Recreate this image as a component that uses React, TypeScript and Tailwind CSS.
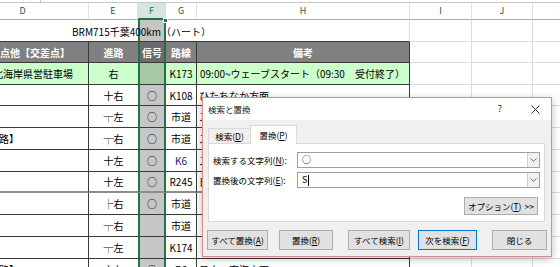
import React from 'react'

type Row = {
  h: string
  d?: string
  e: string
  f: string
  g: string
  note?: string
  gc?: string
  thick?: boolean
}

const GRID = 'grid grid-cols-[132px_49px_28px_31px_213px_62px_61px_60px] -ml-[43px]'
const DARK = 'border-[#3a3a3a]'
const LIGHT = 'border-[#dcdcdc]'

const rows: Row[] = [
  { h: 'h-[21px]', e: '十右', f: '○', g: 'K108', note: 'ひたちなか方面' },
  { h: 'h-[22px]', e: '┬左', f: '○', g: '市道', note: 'スポーツセンター方面' },
  { h: 'h-[22px]', d: '路】', e: '┬右', f: '○', g: '市道', note: 'ス停留所先' },
  { h: 'h-[22px]', e: '十左', f: '○', g: 'K6', note: 'ス方面', gc: 'text-[#23237a]' },
  { h: 'h-[21px]', e: '十左', f: '○', g: 'R245', note: '日立方面', thick: true },
  { h: 'h-[22px]', e: '├右', f: '○', g: '市道', note: '' },
  { h: 'h-[22px]', e: '┬右', f: '', g: '市道', note: '' },
  { h: 'h-[22px]', e: '┬左', f: '', g: 'K174', note: '' },
  { h: 'h-[22px]', d: '路】', e: '十左', f: '○', g: 'R6', note: '日立・東海方面' },
]

const U = ({ c }: { c: string }) => <span className="underline underline-offset-[1px]">{c}</span>

const Btn = ({ children, cls }: { children: React.ReactNode; cls: string }) => (
  <div
    className={`h-[20px] flex items-center justify-center bg-[#e1e1e1] border text-[8.5px] text-black ${cls}`}
  >
    {children}
  </div>
)

const Combo = ({ children }: { children: React.ReactNode }) => (
  <div className="w-[243px] h-[16px] flex border border-[#a0a0a0] bg-white">
    <div className="flex-1 flex items-center pl-[4px] text-[9px] text-black">{children}</div>
    <div className="w-[12px] flex items-center justify-center border-l border-[#d0d0d0] bg-[#f0f0f0]">
      <svg width="7" height="4" viewBox="0 0 7 4">
        <path d="M0.5 0.5 L3.5 3.3 L6.5 0.5" fill="none" stroke="#606060" strokeWidth="0.9" />
      </svg>
    </div>
  </div>
)

const Dialog = () => (
  <div className="absolute left-[202px] top-[97px] w-[350px] h-[160px] border border-[#d48c8c] bg-[#f0f0f0] shadow-[0_2px_8px_rgba(0,0,0,0.25)] flex flex-col">
    <div className="h-[22px] bg-white flex items-center pl-[5px] pr-[1px] text-[8.5px] text-[#222]">
      <span>検索と置換</span>
      <div className="ml-auto flex gap-[5px]">
        <div className="w-[30px] flex justify-center text-[9px]">?</div>
        <div className="w-[30px] flex justify-center items-center">
          <svg width="9" height="9" viewBox="0 0 9 9">
            <path d="M0.5 0.5 L8.5 8.5 M8.5 0.5 L0.5 8.5" stroke="#333" strokeWidth="1" />
          </svg>
        </div>
      </div>
    </div>
    <div className="h-[23px] flex items-end pl-[5px] text-[8.5px] text-black">
      <div className="w-[42px] h-[15px] flex items-center justify-center border border-b-0 border-r-0 border-[#d9d9d9] bg-[#f0f0f0]">
        検索(<U c="D" />)
      </div>
      <div className="relative z-10 -mb-px w-[47px] h-[19px] flex items-center justify-center border border-b-0 border-[#d9d9d9] bg-white">
        置換(<U c="P" />)
      </div>
    </div>
    <div className="ml-[5px] w-[337px] h-[79px] border border-[#d9d9d9] bg-white flex flex-col text-[8.5px] text-black">
      <div className="mt-[8px] flex items-center pl-[4px]">
        <div className="w-[84px]">
          検索する文字列(<U c="N" />):
        </div>
        <Combo>○</Combo>
      </div>
      <div className="mt-[4px] flex items-center pl-[4px]">
        <div className="w-[84px]">
          置換後の文字列(<U c="E" />):
        </div>
        <Combo>
          S<span className="inline-block w-px h-[11px] bg-black ml-px" />
        </Combo>
      </div>
      <div className="mt-[9px] flex justify-end pr-[6px]">
        <div className="w-[74px] h-[18px] flex items-center justify-center gap-[3px] bg-[#e1e1e1] border border-[#adadad]">
          <span>
            オプション(<U c="T" />)
          </span>
          <span>&gt;&gt;</span>
        </div>
      </div>
    </div>
    <div className="mt-[8px] flex pl-[4px]">
      <Btn cls="w-[61px] border-[#adadad]">
        すべて置換(<U c="A" />)
      </Btn>
      <Btn cls="ml-[11px] w-[54px] border-[#adadad]">
        置換(<U c="R" />)
      </Btn>
      <Btn cls="ml-[15px] w-[62px] border-[#adadad]">
        すべて検索(<U c="I" />)
      </Btn>
      <Btn cls="ml-[8px] w-[59px] border-[#0078d7]">
        次を検索(<U c="F" />)
      </Btn>
      <Btn cls="ml-[15px] w-[55px] border-[#adadad]">閉じる</Btn>
    </div>
  </div>
)

export default function App() {
  return (
    <div className="relative w-[560px] h-[267px] overflow-hidden bg-white font-['Noto_Sans_CJK_JP','Noto_Sans',sans-serif] text-black">
      {/* formula bar edge */}
      <div className="relative h-[3px] border-b border-[#c8c8c8]">
        <div className="absolute left-[40px] top-0 h-[3px] w-px bg-[#c8c8c8]" />
      </div>

      {/* column letters */}
      <div className={`${GRID} h-[17px] text-[9px] text-[#444]`}>
        {['D', 'E', 'F', 'G', 'H', 'I', 'J', 'K'].map((c) =>
          c === 'F' ? (
            <div
              key={c}
              className="flex items-center justify-center bg-[#d5e6dc] text-[#217346] border-r border-r-[#dcdcdc] border-b-2 border-b-[#217346]"
            >
              {c}
            </div>
          ) : (
            <div
              key={c}
              className="flex items-center justify-center border-r border-r-[#e2e2e2] border-b border-b-[#ababab]"
            >
              {c}
            </div>
          ),
        )}
      </div>

      {/* title row */}
      <div className={`${GRID} relative h-[22px]`}>
        <div className={`border-b ${DARK}`} />
        <div className={`border-b ${DARK}`} />
        <div className="bg-[#c6c6c6] border-x-2 border-x-[#217346] border-b border-b-[#3a3a3a]" />
        <div className={`border-b ${DARK}`} />
        <div className="border-b border-b-[#3a3a3a] border-r border-r-[#dcdcdc]" />
        <div className={`border-r border-b ${LIGHT}`} />
        <div className={`border-r border-b ${LIGHT}`} />
        <div className={`border-r border-b ${LIGHT}`} />
        <span className="absolute left-[115px] top-0 h-full flex items-center text-[10px] whitespace-nowrap">
          BRM715千葉400km（ハート）
        </span>
      </div>

      {/* table header */}
      <div className={`${GRID} h-[21px] text-[10px] font-bold text-white`}>
        <div className={`bg-[#808080] border-r border-b ${DARK} flex items-center pl-[43px] whitespace-nowrap`}>
          点他【交差点】
        </div>
        <div className={`bg-[#808080] border-b ${DARK} flex items-center justify-center`}>進路</div>
        <div className="bg-[#6b6b6b] border-x-2 border-x-[#217346] border-b border-b-[#3a3a3a] flex items-center justify-center">
          信号
        </div>
        <div className={`bg-[#808080] border-r border-b ${DARK} flex items-center justify-center`}>路線</div>
        <div className={`bg-[#808080] border-r border-b ${DARK} flex items-center justify-center`}>備考</div>
        <div className={`border-r border-b ${LIGHT}`} />
        <div className={`border-r border-b ${LIGHT}`} />
        <div className={`border-r border-b ${LIGHT}`} />
      </div>

      {/* start row */}
      <div className={`${GRID} h-[22px] text-[10px]`}>
        <div className={`bg-[#ccffcc] border-r border-b ${DARK} overflow-hidden flex items-center pl-[36px] whitespace-nowrap`}>
          北海岸県営駐車場
        </div>
        <div className={`bg-[#ccffcc] border-b ${DARK} flex items-center justify-center`}>右</div>
        <div className="bg-[#a6c8a6] border-x-2 border-x-[#217346] border-b border-b-[#3a3a3a]" />
        <div className={`bg-[#ccffcc] border-r border-b ${DARK} flex items-center justify-center`}>K173</div>
        <div className={`bg-[#ccffcc] border-r border-b ${DARK} flex items-center pl-[3px] whitespace-nowrap`}>
          09:00~ウェーブスタート（09:30　受付終了）
        </div>
        <div className={`border-r border-b ${LIGHT}`} />
        <div className={`border-r border-b ${LIGHT}`} />
        <div className={`border-r border-b ${LIGHT}`} />
      </div>

      {/* route rows */}
      {rows.map((r, i) => {
        const b = r.thick ? 'border-b-2 border-b-[#8c8c8c]' : 'border-b border-b-[#3a3a3a]'
        return (
          <div key={i} className={`${GRID} ${r.h} text-[10px]`}>
            <div className={`border-r border-r-[#3a3a3a] ${b} overflow-hidden flex items-center pl-[42px] whitespace-nowrap`}>
              {r.d}
            </div>
            <div className={`${b} flex items-center justify-center`}>{r.e}</div>
            <div className={`bg-[#c6c6c6] border-x-2 border-x-[#217346] ${b} flex items-center justify-center`}>
              {r.f}
            </div>
            <div className={`border-r border-r-[#3a3a3a] ${b} flex items-center justify-center ${r.gc ?? ''}`}>
              {r.g}
            </div>
            <div className={`border-r border-r-[#3a3a3a] ${b} overflow-hidden flex items-center pl-[2px] whitespace-nowrap`}>
              {r.note}
            </div>
            <div className={`border-r border-b ${LIGHT}`} />
            <div className={`border-r border-b ${LIGHT}`} />
            <div className={`border-r border-b ${LIGHT}`} />
          </div>
        )
      })}

      {/* fill handle of the selection */}
      <div className="absolute left-[163px] top-[18px] w-[5px] h-[5px] bg-[#217346] border border-white" />

      <Dialog />
    </div>
  )
}
